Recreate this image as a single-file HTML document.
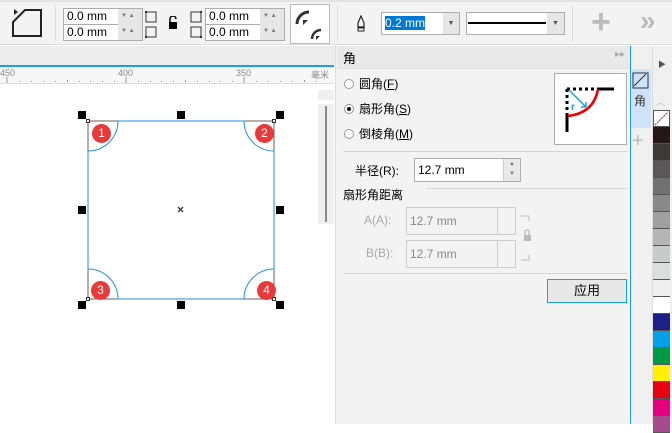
<!DOCTYPE html>
<html><head><meta charset="utf-8"><style>
*{margin:0;padding:0;box-sizing:border-box}
body{width:672px;height:424px;overflow:hidden;background:#fff;position:relative;font-family:"Liberation Sans","Noto Sans CJK SC",sans-serif;font-size:12px;color:#000}
.a{position:absolute}
.inp{position:absolute;background:#fff;border:1px solid #adadad;font-size:12px;line-height:14px;padding-left:3px}
.sw{position:absolute;left:653px;width:17px;height:17px;border-bottom:1px solid #555}
.cj{font-family:"Liberation Sans","Noto Sans CJK SC",sans-serif}
.h{position:absolute;width:8px;height:8px;background:#000}
.badge{position:absolute;width:19px;height:19px;border-radius:50%;background:#e83a3a;color:#fff;font-size:12px;text-align:center;line-height:19px}
</style></head><body>
<div class="a" style="left:0;top:0;width:672px;height:45px;background:#f3f3f3;border-bottom:1px solid #ddd"></div>
<div class="a" style="left:0;top:0;width:672px;height:2px;background:#e3e3e3"></div>
<svg class="a" style="left:10px;top:8px" width="36" height="32"><path d="M15 2H31V28H3V14Z" fill="none" stroke="#222" stroke-width="2"/><path d="M4 1L8 4L4 7Z" fill="#222"/></svg>
<div class="a" style="left:55px;top:5px;width:1px;height:36px;background:#ddd"></div>
<div class="inp" style="left:63px;top:8px;width:80px;height:17px">0.0 mm</div>
<div class="inp" style="left:63px;top:24px;width:80px;height:17px">0.0 mm</div>
<div class="a" style="left:118px;top:9px;width:24px;height:31px;background:#e6e6e6;font-size:6px;color:#777;line-height:15px;padding-left:3px">▼ ▲<br>▼ ▲</div>
<svg class="a" style="left:144px;top:10px" width="16" height="30"><rect x="2" y="2" width="10" height="10" fill="none" stroke="#333"/><rect x="2" y="17" width="10" height="10" fill="none" stroke="#333"/><rect x="1" y="1" width="2" height="2" fill="#333"/><rect x="1" y="26" width="2" height="2" fill="#333"/></svg>
<svg class="a" style="left:168px;top:16px" width="10" height="14"><path d="M2 6V3A3 3 0 0 1 8 3" fill="none" stroke="#000" stroke-width="1.5"/><rect x="1" y="6" width="8" height="7" fill="#000"/></svg>
<svg class="a" style="left:188px;top:10px" width="16" height="30"><rect x="3" y="2" width="10" height="10" fill="none" stroke="#333"/><rect x="3" y="17" width="10" height="10" fill="none" stroke="#333"/><rect x="12" y="1" width="2" height="2" fill="#333"/><rect x="12" y="26" width="2" height="2" fill="#333"/></svg>
<div class="inp" style="left:205px;top:8px;width:80px;height:17px">0.0 mm</div>
<div class="inp" style="left:205px;top:24px;width:80px;height:17px">0.0 mm</div>
<div class="a" style="left:260px;top:9px;width:24px;height:31px;background:#e6e6e6;font-size:6px;color:#777;line-height:15px;padding-left:3px">▼ ▲<br>▼ ▲</div>
<div class="a" style="left:290px;top:4px;width:40px;height:40px;background:#fff;border:1px solid #bbb"></div>
<svg class="a" style="left:290px;top:4px" width="40" height="40"><path d="M7 20A12 12 0 0 1 19 8" fill="none" stroke="#333" stroke-width="3"/><path d="M13 16l5 0l-5 5z" fill="#333"/><path d="M22 35A9 9 0 0 1 31 26" fill="none" stroke="#333" stroke-width="2.5"/><path d="M26 32l4 0l-4 4z" fill="#333"/></svg>
<div class="a" style="left:337px;top:5px;width:1px;height:36px;background:#ddd"></div>
<svg class="a" style="left:356px;top:15px" width="10" height="18"><path d="M5 1L2 8V12H8V8Z" fill="none" stroke="#222" stroke-width="1.2"/><path d="M2 13H8V16H2Z" fill="none" stroke="#222"/></svg>
<div class="inp" style="left:381px;top:12px;width:79px;height:23px;padding:3px"><span style="background:#0078d7;color:#fff">0.2 mm</span></div>
<div class="a" style="left:443px;top:13px;width:16px;height:21px;background:#e6e6e6;color:#555;font-size:7px;text-align:center;line-height:21px">▼</div>
<div class="inp" style="left:466px;top:12px;width:99px;height:23px"></div>
<div class="a" style="left:468px;top:22px;width:78px;height:2px;background:#000"></div>
<div class="a" style="left:547px;top:13px;width:17px;height:21px;background:#e6e6e6;color:#555;font-size:7px;text-align:center;line-height:21px">▼</div>
<div class="a" style="left:572px;top:5px;width:1px;height:36px;background:#ddd"></div>
<div class="a" style="left:591px;top:5px;font-size:34px;color:#bbb;line-height:34px;font-weight:bold">+</div>
<div class="a" style="left:640px;top:7px;font-size:28px;color:#bbb;line-height:28px;font-weight:bold">»</div>
<div class="a" style="left:0;top:46px;width:335px;height:20px;background:#ececec"></div>
<div class="a" style="left:0;top:65px;width:334px;height:2px;background:#1aa0e8"></div>
<div class="a" style="left:0;top:67px;width:334px;height:17px;background:#f7f7f7;border-bottom:1px solid #ddd"></div>
<div class="a" style="left:0;top:68px;font-size:9px;color:#888">450</div>
<div class="a" style="left:118px;top:68px;font-size:9px;color:#888">400</div>
<div class="a" style="left:236px;top:68px;font-size:9px;color:#888">350</div>
<div class="a" style="left:311px;top:68px;font-size:9px;color:#888">毫米</div>
<svg class="a" style="left:0;top:76px" width="334" height="8"><g stroke="#999"><path d="M7 1v6M126 1v6M244 1v6"/></g><g fill="#999"><rect x="19" y="5" width="1" height="1"/><rect x="31" y="5" width="1" height="1"/><rect x="43" y="5" width="1" height="1"/><rect x="55" y="5" width="1" height="1"/><rect x="67" y="4" width="1" height="2"/><rect x="79" y="5" width="1" height="1"/><rect x="90" y="5" width="1" height="1"/><rect x="102" y="5" width="1" height="1"/><rect x="114" y="5" width="1" height="1"/><rect x="138" y="5" width="1" height="1"/><rect x="150" y="5" width="1" height="1"/><rect x="161" y="5" width="1" height="1"/><rect x="173" y="5" width="1" height="1"/><rect x="185" y="4" width="1" height="2"/><rect x="197" y="5" width="1" height="1"/><rect x="209" y="5" width="1" height="1"/><rect x="220" y="5" width="1" height="1"/><rect x="232" y="5" width="1" height="1"/><rect x="256" y="5" width="1" height="1"/><rect x="268" y="5" width="1" height="1"/><rect x="280" y="5" width="1" height="1"/><rect x="292" y="5" width="1" height="1"/><rect x="304" y="4" width="1" height="2"/><rect x="315" y="5" width="1" height="1"/></g></svg>
<div class="a" style="left:318px;top:90px;width:16px;height:10px;background:#efefef"></div>
<div class="a" style="left:318px;top:104px;width:16px;height:120px;background:#efefef"></div>
<div class="a" style="left:325px;top:106px;width:2px;height:116px;background:#888"></div>
<svg class="a" style="left:70px;top:90px" width="250" height="230">
<path d="M18 31H204V209H18Z" fill="none" stroke="#6b5f5a" stroke-width="1"/>
<path d="M48 31H174A30 30 0 0 0 204 61V179A30 30 0 0 0 174 209H48A30 30 0 0 0 18 179V61A30 30 0 0 0 48 31Z" fill="#fff" stroke="#1e8fe8" stroke-width="1"/>
<rect x="16.5" y="29.5" width="3" height="3" fill="#fff" stroke="#000" stroke-width=".8"/>
<rect x="202.5" y="29.5" width="3" height="3" fill="#fff" stroke="#000" stroke-width=".8"/>
<rect x="16.5" y="207.5" width="3" height="3" fill="#fff" stroke="#000" stroke-width=".8"/>
<rect x="202.5" y="207.5" width="3" height="3" fill="#fff" stroke="#000" stroke-width=".8"/>
<path d="M108 117l5 5M113 117l-5 5" stroke="#444" stroke-width="1.5"/>
</svg>
<div class="h" style="left:78px;top:111px"></div><div class="h" style="left:177px;top:111px"></div><div class="h" style="left:276px;top:111px"></div>
<div class="h" style="left:78px;top:206px"></div><div class="h" style="left:276px;top:206px"></div>
<div class="h" style="left:78px;top:301px"></div><div class="h" style="left:177px;top:301px"></div><div class="h" style="left:276px;top:301px"></div>
<div class="badge" style="left:92px;top:124px">1</div>
<div class="badge" style="left:255px;top:124px">2</div>
<div class="badge" style="left:91px;top:281px">3</div>
<div class="badge" style="left:257px;top:281px">4</div>
<div class="a" style="left:335px;top:46px;width:296px;height:378px;background:#f3f3f3;border-left:1px solid #ddd"></div>
<div class="a" style="left:337px;top:46px;width:293px;height:23px;background:#e9e9e9;border-bottom:1px solid #ddd"></div>
<div class="a cj" style="left:343px;top:48px;font-size:13px">角</div>
<div class="a" style="left:615px;top:49px;font-size:10px;color:#aaa">▸▸</div>
<div class="a" style="left:634px;top:47px;font-size:13px;color:#aaa">×</div>
<div class="a" style="left:630px;top:46px;width:1px;height:378px;background:#1aa0e8"></div>
<div class="a" style="left:631px;top:46px;width:21px;height:378px;background:#f0f0f0"></div>
<div class="a" style="left:631px;top:69px;width:20px;height:59px;background:#cfe3f8"></div>
<svg class="a" style="left:632px;top:72px" width="18" height="18"><rect x="1" y="1" width="15" height="15" fill="none" stroke="#333"/><path d="M2 14L14 2" stroke="#333"/></svg>
<div class="a cj" style="left:634px;top:92px;font-size:12px;color:#333">角</div>
<div class="a" style="left:632px;top:131px;font-size:20px;color:#bbb;line-height:20px">+</div>
<div class="a" style="left:652px;top:46px;width:20px;height:378px;background:#f0f0f0;border-left:1px solid #ddd"></div>
<div class="a" style="left:658px;top:59px;font-size:8px;color:#555">▶</div>
<div class="a" style="left:656px;top:95px;font-size:9px;color:#bbb">︿</div>
<div class="a" style="left:344px;top:79px;width:10px;height:10px;border-radius:50%;border:1px solid #999;background:#fff"></div>
<div class="a cj" style="left:359px;top:75px;font-size:12px">圆角(<u>F</u>)</div>
<div class="a" style="left:344px;top:104px;width:10px;height:10px;border-radius:50%;border:1px solid #999;background:#fff"></div>
<div class="a" style="left:347px;top:107px;width:4px;height:4px;border-radius:50%;background:#000"></div>
<div class="a cj" style="left:359px;top:100px;font-size:12px">扇形角(<u>S</u>)</div>
<div class="a" style="left:344px;top:129px;width:10px;height:10px;border-radius:50%;border:1px solid #999;background:#fff"></div>
<div class="a cj" style="left:359px;top:125px;font-size:12px">倒棱角(<u>M</u>)</div>
<div class="a" style="left:554px;top:73px;width:73px;height:72px;background:#fff;border:1px solid #aaa"></div>
<svg class="a" style="left:554px;top:73px" width="73" height="72"><path d="M13 16H45" stroke="#000" stroke-width="3" stroke-dasharray="3 3"/><path d="M13 16V46" stroke="#000" stroke-width="3" stroke-dasharray="3 3"/><path d="M44 16H60" stroke="#000" stroke-width="3"/><path d="M13 43V59" stroke="#000" stroke-width="3"/><path d="M14 43Q40 40 44 16" fill="none" stroke="#e00" stroke-width="2.5"/><path d="M15 17L32 34M32 34v-5M32 34h-5" stroke="#1aa0e8" stroke-width="1.5" fill="none"/><text x="17" y="37" fill="#1aa0e8" font-size="10" font-weight="bold" font-family="Liberation Sans">r</text></svg>
<div class="a" style="left:343px;top:151px;width:284px;height:1px;background:#d5d5d5"></div>
<div class="a cj" style="left:355px;top:162px;font-size:12px">半径(R):</div>
<div class="inp" style="left:414px;top:158px;width:107px;height:24px;line-height:22px">12.7 mm</div>
<div class="a" style="left:503px;top:159px;width:17px;height:22px;background:#e9e9e9;border-left:1px solid #ccc;color:#777;font-size:6px;text-align:center;line-height:10px">▲<br>▼</div>
<div class="a cj" style="left:343px;top:186px;font-size:12px">扇形角距离</div>
<div class="a" style="left:426px;top:188px;width:201px;height:1px;background:#d5d5d5"></div>
<div class="a cj" style="left:364px;top:213px;font-size:12px;color:#aaa">A(A):</div>
<div class="a cj" style="left:366px;top:246px;font-size:12px;color:#aaa">B(B):</div>
<div class="inp" style="left:406px;top:207px;width:110px;height:28px;line-height:26px;background:#f3f3f3;border-color:#ccc;color:#888">12.7 mm</div>
<div class="inp" style="left:406px;top:240px;width:110px;height:28px;line-height:26px;background:#f3f3f3;border-color:#ccc;color:#888">12.7 mm</div>
<div class="a" style="left:497px;top:208px;width:1px;height:26px;background:#ccc"></div>
<div class="a" style="left:497px;top:241px;width:1px;height:26px;background:#ccc"></div>
<svg class="a" style="left:519px;top:215px" width="14" height="46"><path d="M2 1H10V6M2 45H10V40" fill="none" stroke="#bbb"/><path d="M6 20V17A2 2 0 0 1 10 17V20" fill="none" stroke="#bbb" stroke-width="1.3"/><rect x="5" y="20" width="7" height="6" fill="#bbb"/></svg>
<div class="a" style="left:343px;top:273px;width:284px;height:1px;background:#d5d5d5"></div>
<div class="a cj" style="left:547px;top:279px;width:80px;height:24px;border:1px solid #1aa0e8;background:#e8e8e8;text-align:center;line-height:22px;font-size:13px">应用</div>
<div class="sw" style="top:110px;background:#fff;border:1px solid #555"></div>
<svg class="a" style="left:654px;top:111px" width="15" height="15"><path d="M1 14L14 1" stroke="#e00" stroke-dasharray="2 1"/></svg>
<div class="sw" style="top:127px;background:#231815"></div>
<div class="sw" style="top:144px;background:#3e3a39"></div>
<div class="sw" style="top:161px;background:#595757"></div>
<div class="sw" style="top:178px;background:#727171"></div>
<div class="sw" style="top:195px;background:#898989"></div>
<div class="sw" style="top:212px;background:#9f9fa0"></div>
<div class="sw" style="top:229px;background:#b5b5b6"></div>
<div class="sw" style="top:246px;background:#c9caca"></div>
<div class="sw" style="top:263px;background:#dcdddd"></div>
<div class="sw" style="top:280px;background:#efefef"></div>
<div class="sw" style="top:297px;background:#fff"></div>
<div class="sw" style="top:314px;background:#1d2088"></div>
<div class="sw" style="top:331px;background:#00a0e9"></div>
<div class="sw" style="top:348px;background:#009944"></div>
<div class="sw" style="top:365px;background:#fff100"></div>
<div class="sw" style="top:382px;background:#e60012"></div>
<div class="sw" style="top:399px;background:#e4007f"></div>
<div class="sw" style="top:416px;background:#a84b8e"></div>
</body></html>
